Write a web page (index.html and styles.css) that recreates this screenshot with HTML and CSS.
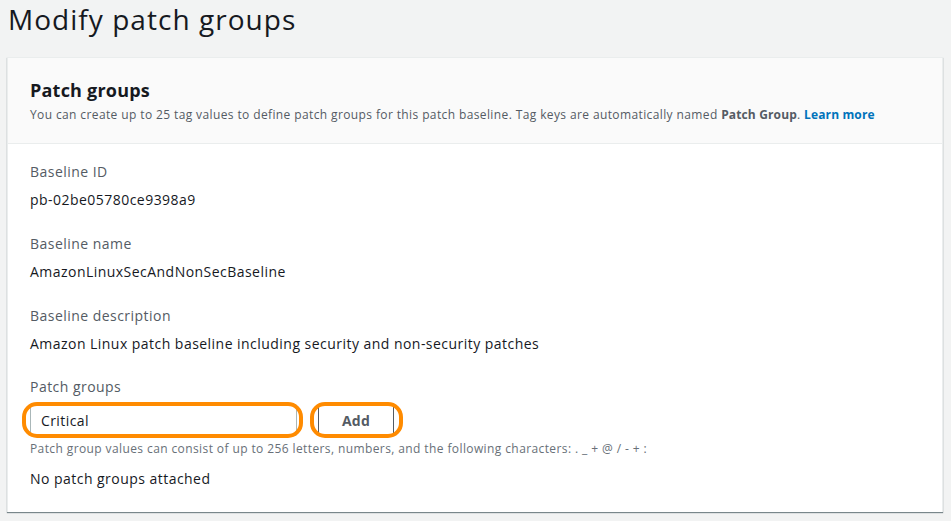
FILE: index.html
```html
<!DOCTYPE html>
<html lang="en">
<head>
<meta charset="utf-8">
<title>Modify patch groups</title>
<link rel="stylesheet" href="styles.css">
</head>
<body>
<h1 class="page-title">Modify patch groups</h1>
<section class="card">
  <header class="card-header">
    <h2 class="card-title">Patch groups</h2>
    <p class="card-desc">You can create up to 25 tag values to define patch groups for this patch baseline. Tag keys are automatically named <b>Patch Group</b>. <a class="link" href="#">Learn more</a></p>
  </header>
  <div class="card-body">
    <div class="field">
      <div class="label">Baseline ID</div>
      <div class="value">pb-02be05780ce9398a9</div>
    </div>
    <div class="field">
      <div class="label">Baseline name</div>
      <div class="value">AmazonLinuxSecAndNonSecBaseline</div>
    </div>
    <div class="field field-tight">
      <div class="label">Baseline description</div>
      <div class="value">Amazon Linux patch baseline including security and non-security patches</div>
    </div>
    <div class="field field-last">
      <div class="label">Patch groups</div>
      <div class="input-row">
        <span class="mark mark-input"><input class="text-input" type="text" value="Critical"></span>
        <span class="mark mark-btn"><button class="btn" type="button">Add</button></span>
      </div>
      <div class="hint">Patch group values can consist of up to 256 letters, numbers, and the following characters: . _ + @ / - + :</div>
      <div class="empty">No patch groups attached</div>
    </div>
  </div>
</section>
</body>
</html>
```
FILE: styles.css
```css
html, body {
  margin: 0;
  padding: 0;
}
body {
  background: #f2f3f3;
  font-family: "Open Sans", "Noto Sans", sans-serif;
  color: #16191f;
  width: 951px;
  height: 521px;
  overflow: hidden;
  letter-spacing: 0.029em;
}
.page-title {
  margin: 0;
  padding: 1px 0 0 8px;
  font-size: 28px;
  line-height: 36px;
  font-weight: 400;
  letter-spacing: 0.037em;
  color: #16191f;
  height: 55px;
  box-sizing: border-box;
}
.card {
  margin-left: 7px;
  width: 936px;
  box-sizing: border-box;
  background: #fff;
  border: 1px solid #eaeded;
  border-bottom: 0;
  box-shadow: 0 1px 1px 0 rgba(0, 28, 36, 0.5);
  margin-top: 2px;
}
.card-header {
  background: #fafafa;
  border-bottom: 1px solid #eaeded;
  padding: 19px 22px 19px;
}
.card-title {
  margin: 0;
  font-size: 18px;
  line-height: 26px;
  font-weight: 700;
  letter-spacing: 0.012em;
}
.card-desc {
  margin: 3px 0 0;
  font-size: 12px;
  line-height: 18px;
  letter-spacing: 0.032em;
  color: #545b64;
}
.card-desc b {
  font-weight: 700;
  letter-spacing: 0.012em;
}
.link {
  color: #0073bb;
  font-weight: 700;
  letter-spacing: 0.012em;
  text-decoration: none;
}
.card-body {
  padding: 17px 22px 22px;
}
.field {
  margin-bottom: 22px;
}
.field-tight {
  margin-bottom: 21px;
}
.field-last {
  margin-bottom: 0;
}
.label {
  font-size: 14px;
  line-height: 22px;
  color: #545b64;
}
.value {
  margin-top: 6px;
  font-size: 14px;
  line-height: 22px;
  color: #16191f;
}
.input-row {
  display: flex;
  align-items: center;
  gap: 21px;
  margin-top: 6px;
}
.mark {
  position: relative;
  display: inline-flex;
}
.mark::after {
  content: "";
  position: absolute;
  top: -2px;
  bottom: -2px;
  border: 4px solid #ff8b00;
  border-radius: 15px;
  pointer-events: none;
}
.mark-input::after {
  left: -8px;
  right: -6px;
}
.mark-btn::after {
  left: -8px;
  right: -9px;
}
.text-input {
  width: 267px;
  height: 32px;
  box-sizing: border-box;
  border: 1px solid #aab7b8;
  border-radius: 2px;
  padding: 0 10px;
  font-family: inherit;
  font-size: 14px;
  letter-spacing: 0.029em;
  color: #16191f;
  background: #fff;
  margin: 0;
}
.btn {
  width: 76px;
  height: 32px;
  box-sizing: border-box;
  border: 1px solid #545b64;
  border-radius: 2px;
  background: #fff;
  color: #545b64;
  font-family: inherit;
  font-weight: 700;
  font-size: 14px;
  letter-spacing: 0.02em;
  padding: 0;
  margin: 0;
}
.hint {
  margin-top: 5px;
  font-size: 12px;
  line-height: 16px;
  letter-spacing: 0.033em;
  color: #687078;
}
.empty {
  margin-top: 11px;
  font-size: 14px;
  line-height: 22px;
  color: #16191f;
}
```
